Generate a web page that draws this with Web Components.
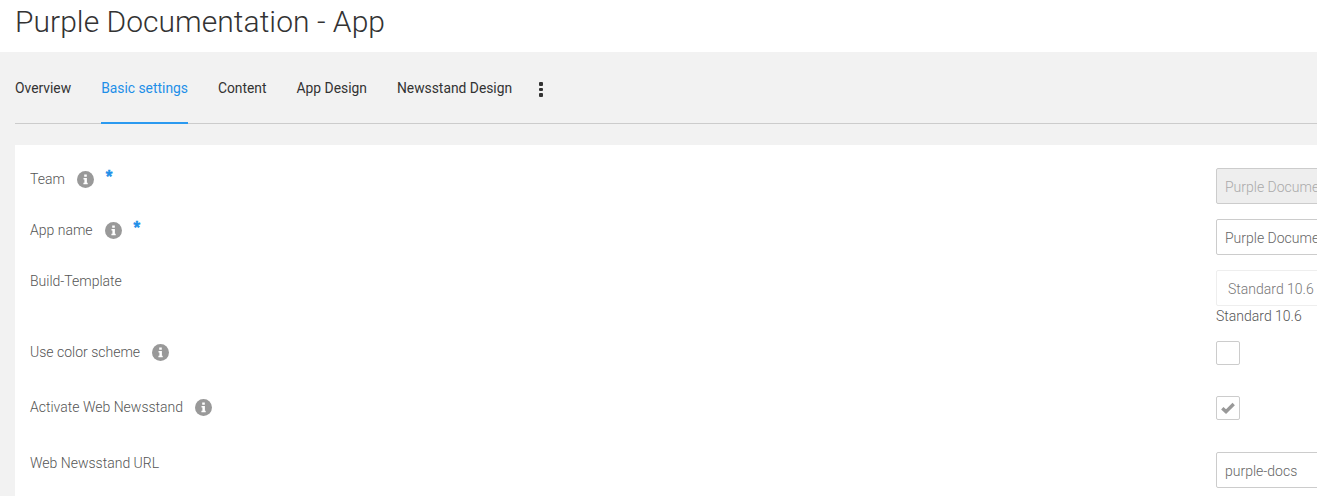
<!DOCTYPE html>
<html lang="en">
<head>
<meta charset="utf-8">
<title>Purple Documentation - App</title>
<style>
	html, body { margin: 0; height: 100%; overflow: hidden; background: #fff; }
	body { font: 300 14px/22px Roboto, "Liberation Sans", sans-serif; color: #555; }
</style>
</head>
<body>
<app-page>
	<span slot="title">Purple Documentation - App</span>
	<tab-bar slot="tabs">
		<tab-item>Overview</tab-item>
		<tab-item active>Basic settings</tab-item>
		<tab-item>Content</tab-item>
		<tab-item>App Design</tab-item>
		<tab-item>Newsstand Design</tab-item>
		<more-dots></more-dots>
	</tab-bar>
	<form-row info required>Team<text-field slot="control" disabled value="Purple Documentation"></text-field></form-row>
	<form-row info required>App name<text-field slot="control" value="Purple Documentation"></text-field></form-row>
	<form-row>Build-Template<select-field slot="control" value="Standard 10.6"></select-field></form-row>
	<form-row info>Use color scheme<check-box slot="control"></check-box></form-row>
	<form-row info>Activate Web Newsstand<check-box slot="control" checked style="margin-bottom:17px"></check-box></form-row>
	<form-row>Web Newsstand URL<text-field slot="control" value="purple-docs"></text-field></form-row>
</app-page>
<script>
function el(tag, css, html) {
	return class extends HTMLElement {
		constructor() {
			super();
			this.attachShadow({ mode: "open" }).innerHTML = `<style>${css}</style>${typeof html == "function" ? html(this) : html}`;
		}
	};
}

customElements.define("app-page", el("app-page", `
	:host { display: block; height: 496px; overflow: hidden; }
	h1 { margin: 0; height: 52px; padding-left: 15px; font-size: 30px; line-height: 44px; font-weight: 300; color: #333; letter-spacing: .04px; box-sizing: border-box; }
	.bar { background: #f2f2f2; padding-left: 15px; height: 444px; box-sizing: border-box; }
	.card { background: #fff; margin-top: 21px; padding: 23px 0 0 15px; display: flex; flex-direction: column; gap: 15px; height: 360px; }
`, `
	<h1><slot name="title"></slot></h1>
	<div class="bar">
		<slot name="tabs"></slot>
		<div class="card"><slot></slot></div>
	</div>
`));

customElements.define("tab-bar", el("tab-bar", `
	:host { display: flex; gap: 30px; height: 72px; border-bottom: 1px solid #ccc; box-sizing: border-box; }
`, `<slot></slot>`));

customElements.define("tab-item", el("tab-item", `
	:host { display: block; height: 72px; box-sizing: border-box; padding-top: 25px; font-size: 13.85px; line-height: 22px; font-weight: 400; color: #333; }
	:host([active]) { color: #1e8fe8; box-shadow: inset 0 -2px 0 #2b9af0; }
`, `<slot></slot>`));

customElements.define("more-dots", el("more-dots", `
	:host { display: flex; flex-direction: column; gap: 2px; padding: 30px 0 0 0; margin-left: -3px; width: 4px; }
	i { display: block; width: 3.5px; height: 3.5px; background: #333; border-radius: 1px; }
`, `<i></i><i></i><i></i>`));

const infoIcon = `<svg class="info" width="17" height="17" viewBox="0 0 17 17" aria-hidden="true"><circle cx="8.5" cy="8.5" r="8.5" fill="#999"/><path fill="#fff" d="M7.2 3.4h2.6v2.3H7.2zM6.5 7h3.4v4.7h.8v1.6H6.4v-1.6h1V8.6h-.9z"/></svg>`;

customElements.define("form-row", el("form-row", `
	:host { display: grid; grid-template-columns: 1186px 1fr; }
	.label { display: flex; align-items: flex-start; height: 22px; }
	.info { margin: 3px 0 0 12px; }
	.star { margin-left: 12px; margin-top: -3px; color: #1e8fe8; font-weight: 900; font-size: 14px; -webkit-text-stroke: .7px #1e8fe8; }
`, r => `
	<div class="label"><span><slot></slot></span>
		${r.hasAttribute("info") ? infoIcon : ""}
		${r.hasAttribute("required") ? `<span class="star">*</span>` : ""}
	</div>
	<div><slot name="control"></slot></div>
`));

customElements.define("text-field", el("text-field", `
	:host { display: block; width: 300px; height: 36px; box-sizing: border-box; border: 1px solid #ccc; border-radius: 2px; padding: 0 8px; line-height: 36px; font-size: 14px; color: #666; white-space: nowrap; overflow: hidden; }
	:host([disabled]) { background: #eee; color: #aaa; }
`, f => `${f.getAttribute("value")}`));

customElements.define("select-field", el("select-field", `
	:host { display: block; }
	.box { width: 300px; height: 36px; box-sizing: border-box; border: 1px solid #eee; border-radius: 2px; padding-left: 11px; line-height: 36px; color: #777; }
	.val { line-height: 20px; color: #555; }
`, f => `<div class="box">${f.getAttribute("value")}</div><div class="val">${f.getAttribute("value")}</div>`));

customElements.define("check-box", el("check-box", `
	:host { display: block; width: 24px; height: 24px; box-sizing: border-box; border: 1px solid #ccc; border-radius: 2px; margin-bottom: 16px; background: #fff; }
	svg { display: block; margin: 5px 0 0 4px; }
`, c => c.hasAttribute("checked") ? `<svg width="14" height="12" viewBox="0 0 14 12" aria-hidden="true"><path fill="none" stroke="#999" stroke-width="3.4" d="M1.3 6.2 5 9.6 12.7 2"/></svg>` : ""));
</script>
</body>
</html>
